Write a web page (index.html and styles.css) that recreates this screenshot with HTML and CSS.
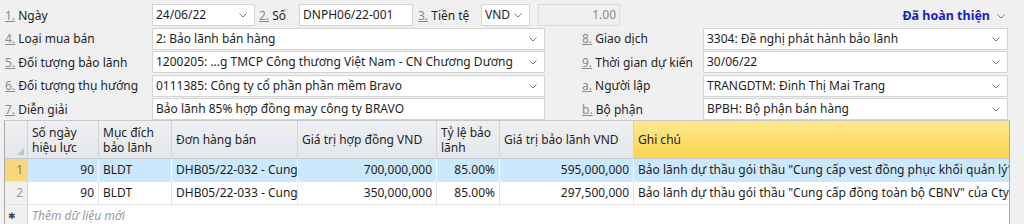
FILE: index.html
```html
<!DOCTYPE html>
<html lang="vi">
<head>
<meta charset="utf-8">
<title>Bảo lãnh</title>
<link rel="stylesheet" href="styles.css">
</head>
<body>
<div class="form">
  <div class="row">
    <div class="label"><u>1.</u> Ngày</div>
    <div class="box w-date">24/06/22<svg class="chev" viewBox="0 0 8 5"><polyline points="0.5,0.5 4,4 7.5,0.5"/></svg></div>
    <div class="label lbl-so"><u>2.</u> Số</div>
    <div class="box w-so">DNPH06/22-001</div>
    <div class="label lbl-tt"><u>3.</u> Tiền tệ</div>
    <div class="box w-vnd">VND<svg class="chev" viewBox="0 0 8 5"><polyline points="0.5,0.5 4,4 7.5,0.5"/></svg></div>
    <div class="box w-rate disabled">1.00</div>
    <div class="status">Đã hoàn thiện<svg class="chev" viewBox="0 0 8 5"><polyline points="0.5,0.5 4,4 7.5,0.5"/></svg></div>
  </div>
  <div class="row">
    <div class="label"><u>4.</u> Loại mua bán</div>
    <div class="box w-left">2: Bảo lãnh bán hàng<svg class="chev" viewBox="0 0 8 5"><polyline points="0.5,0.5 4,4 7.5,0.5"/></svg></div>
    <div class="label lbl-right"><u>8.</u> Giao dịch</div>
    <div class="box w-right">3304: Đề nghị phát hành bảo lãnh<svg class="chev" viewBox="0 0 8 5"><polyline points="0.5,0.5 4,4 7.5,0.5"/></svg></div>
  </div>
  <div class="row">
    <div class="label"><u>5.</u> Đối tượng bảo lãnh</div>
    <div class="box w-left">1200205: ...g TMCP Công thương Việt Nam - CN Chương Dương<svg class="chev" viewBox="0 0 8 5"><polyline points="0.5,0.5 4,4 7.5,0.5"/></svg></div>
    <div class="label lbl-right"><u>9.</u> Thời gian dự kiến</div>
    <div class="box w-right">30/06/22<svg class="chev" viewBox="0 0 8 5"><polyline points="0.5,0.5 4,4 7.5,0.5"/></svg></div>
  </div>
  <div class="row">
    <div class="label"><u>6.</u> Đối tượng thụ hướng</div>
    <div class="box w-left">0111385: Công ty cổ phần phần mềm Bravo<svg class="chev" viewBox="0 0 8 5"><polyline points="0.5,0.5 4,4 7.5,0.5"/></svg></div>
    <div class="label lbl-right"><u>a.</u> Người lập</div>
    <div class="box w-right">TRANGDTM: Đinh Thị Mai Trang<svg class="chev" viewBox="0 0 8 5"><polyline points="0.5,0.5 4,4 7.5,0.5"/></svg></div>
  </div>
  <div class="row">
    <div class="label"><u>7.</u> Diễn giải</div>
    <div class="box w-left">Bảo lãnh 85% hợp đồng may công ty BRAVO</div>
    <div class="label lbl-right"><u>b.</u> Bộ phận</div>
    <div class="box w-right">BPBH: Bộ phận bán hàng<svg class="chev" viewBox="0 0 8 5"><polyline points="0.5,0.5 4,4 7.5,0.5"/></svg></div>
  </div>
</div>

<div class="grid">
  <div class="hd corner"><span class="tri"></span></div>
  <div class="hd">Số ngày<br>hiệu lực</div>
  <div class="hd">Mục đích<br>bảo lãnh</div>
  <div class="hd">Đơn hàng bán</div>
  <div class="hd">Giá trị hợp đồng VND</div>
  <div class="hd">Tỷ lệ bảo<br>lãnh</div>
  <div class="hd">Giá trị bảo lãnh VND</div>
  <div class="hd hd-active">Ghi chú</div>

  <div class="rh rh-sel">1</div>
  <div class="c sel num">90</div>
  <div class="c sel">BLDT</div>
  <div class="c sel">DHB05/22-032 - Cung</div>
  <div class="c sel num">700,000,000</div>
  <div class="c sel num">85.00%</div>
  <div class="c sel num">595,000,000</div>
  <div class="c sel">Bảo lãnh dự thầu gói thầu "Cung cấp vest đồng phục khối quản lý"</div>

  <div class="rh">2</div>
  <div class="c num">90</div>
  <div class="c">BLDT</div>
  <div class="c">DHB05/22-033 - Cung</div>
  <div class="c num">350,000,000</div>
  <div class="c num">85.00%</div>
  <div class="c num">297,500,000</div>
  <div class="c">Bảo lãnh dự thầu gói thầu "Cung cấp đồng toàn bộ CBNV" của Cty</div>

  <div class="rh rh-new">✱</div>
  <div class="c newrow">Thêm dữ liệu mới</div>
</div>
</body>
</html>
```

FILE: styles.css
```css
* { box-sizing: border-box; }
html, body {
  margin: 0;
  padding: 0;
  background: #f0f0f0;
  font-family: "Noto Sans", "Open Sans", sans-serif;
  font-size: 12px;
  color: #1e1e1e;
  overflow: hidden;
}
.form {
  display: flex;
  flex-direction: column;
  gap: 1.5px;
  padding: 4px 0 0 5px;
}
.row {
  display: flex;
  align-items: center;
  height: 22px;
}
.label {
  width: 147px;
  flex: none;
  white-space: nowrap;
  color: #1e1e1e;
}
.label u {
  color: #8a8a8a;
  text-decoration-color: #8a8a8a;
}
.box {
  position: relative;
  height: 22px;
  line-height: 20px;
  background: #fff;
  border: 1px solid #d4d4d4;
  padding: 0 20px 0 3px;
  white-space: nowrap;
  overflow: hidden;
  flex: none;
}
.chev {
  position: absolute;
  right: 7px;
  top: 8px;
  width: 8px;
  height: 5px;
  fill: none;
  stroke: #7a7a7a;
  stroke-width: 1;
}
.w-date { width: 103px; }
.lbl-so { width: 44px; padding-left: 4px; }
.w-so { width: 114px; padding-right: 3px; }
.lbl-tt { width: 68px; padding-left: 5px; }
.w-vnd { width: 49px; }
.w-rate {
  width: 82px;
  margin-left: 8px;
  text-align: right;
  padding-right: 3px;
}
.disabled { background: #f0f0f0; color: #8a8a8a; border-color: #dcdcdc; }
.status {
  position: relative;
  margin-left: auto;
  margin-right: 16px;
  padding-right: 18px;
  font-weight: 700;
  font-size: 12.5px;
  color: #1c1cc4;
  white-space: nowrap;
}
.status .chev { right: 3px; top: 7px; }
.w-left { width: 393px; }
.lbl-right { width: 121px; margin-left: 37px; }
.w-right { width: 305px; }

.grid {
  margin: 0 14px 0 4px;
  display: grid;
  grid-template-columns: 23px 71px 73px 126px 139px 63px 134px 1fr;
  grid-template-rows: 38px 23px 23px 23px;
  border-left: 1px solid #a9a9a9;
  border-right: 1px solid #a9a9a9;
  border-top: 1px solid #c8c8c8;
  background: #fff;
}
.hd {
  background: linear-gradient(#eef0f3, #e4e7eb);
  border-right: 1px solid #d0d3d8;
  border-bottom: 1px solid #c3c7cd;
  padding: 0 4px;
  display: flex;
  align-items: center;
  line-height: 15px;
  white-space: nowrap;
  overflow: hidden;
}
.corner { position: relative; }
.tri {
  position: absolute;
  right: 3px;
  bottom: 3px;
  width: 0;
  height: 0;
  border-left: 7px solid transparent;
  border-bottom: 7px solid #c4c4c4;
}
.hd-active {
  background: linear-gradient(#fee98f, #fbd34e);
  border-right: none;
}
.c {
  border-right: 1px solid #e2e2e2;
  border-bottom: 1px solid #e2e2e2;
  padding: 0 4px;
  line-height: 22px;
  white-space: nowrap;
  overflow: hidden;
}
.c:nth-child(8n) { border-right: none; }
.num { text-align: right; }
.sel {
  background: #cce8fc;
  border-right-color: #f4faff;
  border-bottom-color: #e2e2e2;
}
.rh {
  background: #f0f0f0;
  border-right: 1px solid #d4d4d4;
  border-bottom: 1px solid #e2e2e2;
  color: #9a9a9a;
  text-align: right;
  padding-right: 4px;
  line-height: 22px;
  font-size: 12px;
}
.rh-sel { background: #f9d57b; color: #8a7a50; }
.rh-new { text-align: left; padding-left: 3px; font-size: 9px; color: #444; }
.newrow {
  grid-column: 2 / 9;
  font-style: italic;
  color: #9a9a9a;
  border-right: none;
}
```
